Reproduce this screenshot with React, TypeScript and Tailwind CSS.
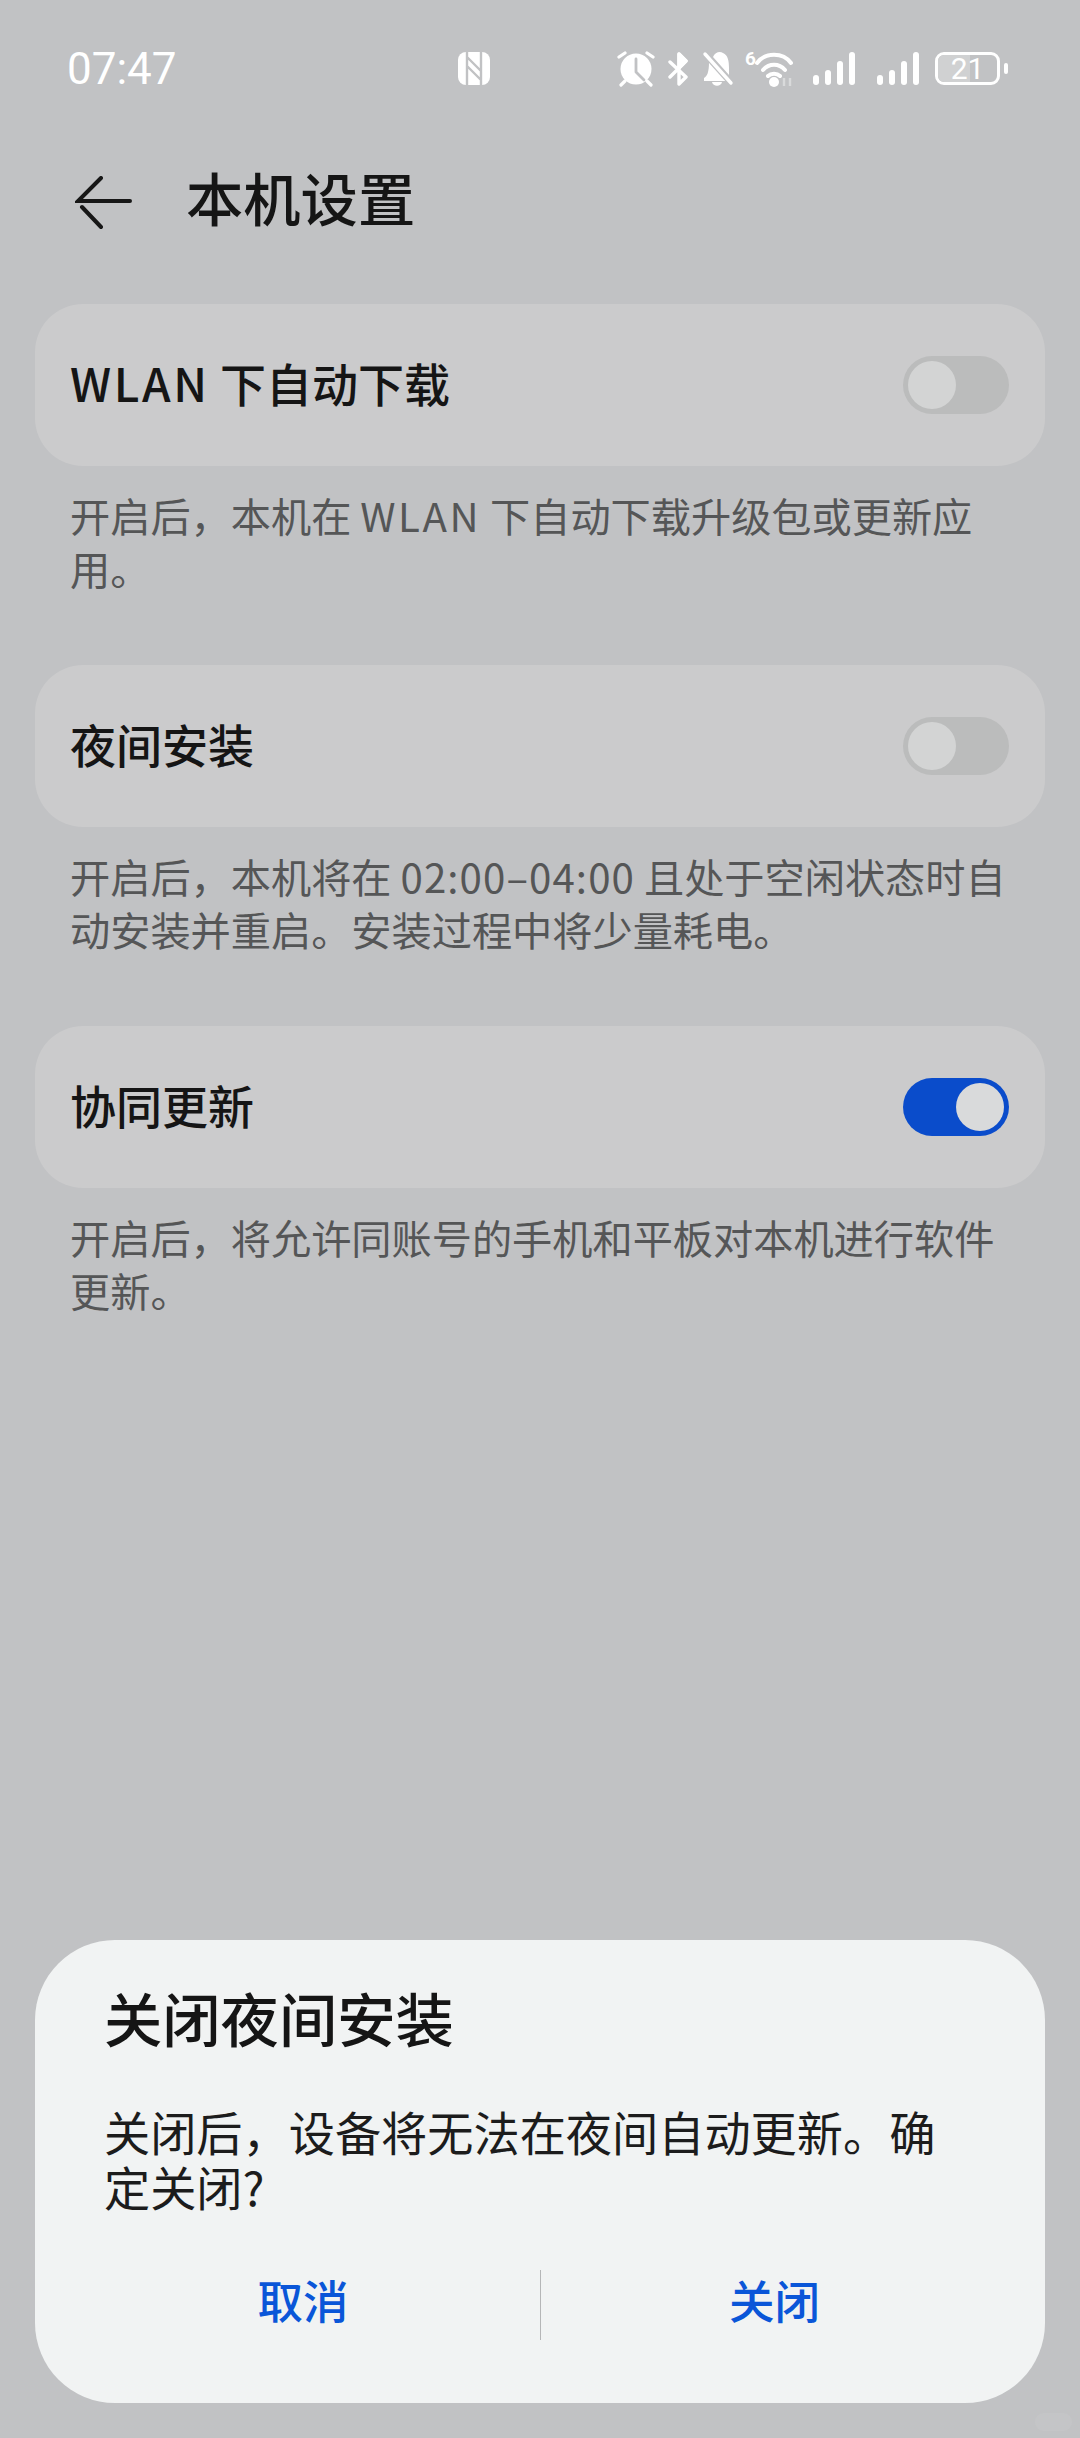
const cjk = "font-['Noto_Sans_CJK_SC','Noto_Sans',sans-serif]";

function Toggle({ on }: { on?: boolean }) {
  if (on) {
    return (
      <div className="flex h-[58px] w-[106px] items-center justify-end rounded-full bg-[#0a4ccb] pr-[5px]">
        <div className="h-[48px] w-[48px] rounded-full bg-[#d9dadb]" />
      </div>
    );
  }
  return (
    <div className="flex h-[58px] w-[106px] items-center rounded-full bg-[#bbbcbc] pl-[5px]">
      <div className="h-[48px] w-[48px] rounded-full bg-[#d3d4d4]" />
    </div>
  );
}

function SettingGroup({ label, note, on }: { label: React.ReactNode; note: React.ReactNode; on?: boolean }) {
  return (
    <section>
      <div className="flex h-[162px] items-center justify-between rounded-[48px] bg-[#cbcbcc] pl-[35px] pr-[36px]">
        <span className="mb-[6px] text-[46px] font-medium leading-none text-[#151515]">{label}</span>
        <Toggle on={on} />
      </div>
      <p className="mt-[22px] pl-[35px] pr-[30px] text-[40.2px] leading-[53px] text-[#555657]">{note}</p>
    </section>
  );
}

function Signal() {
  return (
    <div className="flex w-[42px] items-end justify-between">
      <div className="h-[10px] w-[6px] rounded-full bg-white" />
      <div className="h-[15px] w-[6px] rounded-full bg-white" />
      <div className="h-[24px] w-[6px] rounded-full bg-white" />
      <div className="h-[33px] w-[6px] rounded-full bg-white" />
    </div>
  );
}

function StatusIcons() {
  return (
    <div className="flex items-center text-white">
      {/* alarm */}
      <svg width="38" height="36" viewBox="0 0 38 36">
        <circle cx="19" cy="18" r="15.5" fill="currentColor" />
        <path d="M19 8v13l8 8" stroke="#c1c2c4" strokeWidth="2.8" fill="none" strokeLinecap="round" strokeLinejoin="round" />
        <path d="M2 6l6-4M36 6l-6-4M8 30l-4 4M30 30l4 4" stroke="currentColor" strokeWidth="3.2" strokeLinecap="round" />
      </svg>
      {/* bluetooth */}
      <svg width="20" height="34" viewBox="0 0 20 34" fill="none" stroke="currentColor" strokeWidth="3.4" strokeLinecap="round" strokeLinejoin="round" className="ml-[13px]">
        <path d="M2 10l16 15-7 7V2l7 7L2 25" />
        <path d="M11 2l7 7-7 7z" fill="currentColor" />
      </svg>
      {/* muted bell */}
      <svg width="32" height="36" viewBox="0 0 32 36" className="ml-[14px]">
        <path d="M11 6C13 1 18 0 21 2c5 2 6 8 6 15v7z" fill="currentColor" />
        <path d="M7 11l17 19H2v-3c3-2 5-5 5-16z" fill="currentColor" />
        <path d="M10 31h10c-1 5-9 5-10 0z" fill="currentColor" />
        <path d="M3 3l26 29" stroke="#c1c2c4" strokeWidth="6" />
        <path d="M3 3l26 29" stroke="currentColor" strokeWidth="3.4" strokeLinecap="round" />
      </svg>
      <div className="relative ml-[11px] h-[36px] w-[48px]">
        <span className="absolute left-0 top-[-4px] font-['Roboto',sans-serif] text-[19px] font-bold leading-[24px]">6</span>
        {/* wifi */}
        <svg width="40" height="36" viewBox="0 0 40 36" fill="none" stroke="currentColor" strokeWidth="4" strokeLinecap="round" className="absolute left-[9px] top-0">
          <path d="M3 12C11 1 29 1 37 12M9 19c6-7 16-7 22 0M14 25c3-3 9-3 12 0" />
          <circle cx="20" cy="31" r="5" fill="currentColor" stroke="none" />
          <path d="M30 35v-8M36 35v-8" stroke="#d9dadb" strokeWidth="2.4" strokeLinecap="butt" />
        </svg>
      </div>
      <div className="ml-[20px]">
        <Signal />
      </div>
      <div className="ml-[22px]">
        <Signal />
      </div>
      <div className="relative ml-[16px] flex h-[33px] w-[65px] items-center justify-center overflow-hidden rounded-[9px] border-[3px] border-white font-['Roboto',sans-serif] text-[30px] leading-none text-white">
        <div className="absolute inset-y-0 left-0 w-[32px] bg-[#d0d1d2]" />
        <span className="relative">21</span>
      </div>
      <div className="ml-[4px] h-[11px] w-[4px] rounded-full bg-white" />
    </div>
  );
}

export default function App() {
  return (
    <div className={`relative flex h-[2438px] w-[1080px] flex-col overflow-hidden bg-[#c1c2c4] ${cjk}`}>
      <div className="flex h-[136px] items-center pl-[67px] pt-[1px]">
        <span className="w-[391px] font-['Roboto',sans-serif] text-[44px] leading-none text-white">07:47</span>
        {/* nfc */}
        <svg width="32" height="33" viewBox="0 0 32 33" className="text-white">
          <rect width="32" height="33" rx="8" fill="currentColor" />
          <path d="M9 0v33M23 0v33M9 5l14 14M9 14l14 14" stroke="#c1c2c4" strokeWidth="2.4" fill="none" />
        </svg>
        <div className="w-[127px]" />
        <StatusIcons />
      </div>

      <header className="flex h-[130px] items-center pl-[75px]">
        <svg width="60" height="54" viewBox="0 0 60 54" fill="none" stroke="#171717" strokeWidth="4" strokeLinecap="round" className="mt-[4px]">
          <path d="M26 2L3 25h52M7 31l19 20" />
        </svg>
        <h1 className="mb-[8px] ml-[51px] text-[57.3px] font-medium leading-none text-[#151515]">本机设置</h1>
      </header>

      <main className="mt-[38px] flex flex-col gap-[71px] px-[35px]">
        <SettingGroup
          label={<><span className="tracking-[2.6px]">WLAN</span> 下自动下载</>}
          note={<>开启后，本机在 <span className="tracking-[2.5px]">WLAN</span> 下自动下载升级包或更新应<br />用。</>}
        />
        <SettingGroup
          label="夜间安装"
          note={<>开启后，本机将在 <span className="tracking-[1.1px]">02:00–04:00</span> 且处于空闲状态时自<br />动安装并重启。安装过程中将少量耗电。</>}
        />
        <SettingGroup label="协同更新" note={<>开启后，将允许同账号的手机和平板对本机进行软件<br />更新。</>} on />
      </main>

      <div className="flex-1" />

      <div className="mx-[35px] mb-[35px] rounded-[80px] bg-[#f1f3f3] pb-[63px] pl-[69px] pr-[70px] pt-[37px]">
        <h2 className="text-[58.3px] font-medium leading-[80px] text-[#151515]">关闭夜间安装</h2>
        <p className="mt-[46px] text-[46.2px] leading-[55px] text-[#1c1c1c]">关闭后，设备将无法在夜间自动更新。确定关闭?</p>
        <div className="-ml-[38px] -mr-[33px] mt-[57px] flex items-center">
          <button className="w-[474px] pb-[12px] text-[45.5px] font-medium leading-[58px] text-[#0a56d8]">取消</button>
          <div className="h-[70px] w-px bg-[#b5b6b7]" />
          <button className="flex-1 pb-[12px] text-[45.5px] font-medium leading-[58px] text-[#0a56d8]">关闭</button>
        </div>
      </div>

      {/* faint watermark badge in the corner */}
      <div className="absolute left-[1035px] top-[2413px] h-[18px] w-[37px] rounded-full bg-white/5" />
    </div>
  );
}
